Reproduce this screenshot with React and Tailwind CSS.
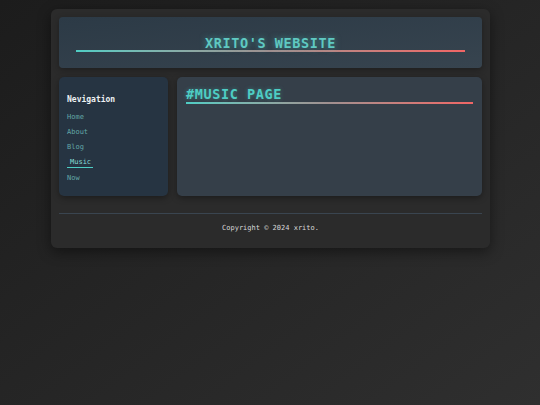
// ─── App ──────────────────────────────────────────────────────────
const NAV = ['Home', 'About', 'Blog', 'Music', 'Now']

function NavLink({ label, active }) {
  return (
    <a
      href="#"
      className={`block text-[7px] leading-[9px] ${
        active
          ? 'text-[#86dcd6] border-b border-[#4ecdc4] pl-[3px] pr-[2px] w-fit'
          : 'text-[#62a7a7]'
      }`}
    >
      {label}
    </a>
  )
}

export default function App() {
  return (
    <div
      className="min-h-[405px] w-full bg-gradient-to-br from-[#1c1c1c] to-[#2f2f2f] pt-[9px]"
      style={{ fontFamily: '"DejaVu Sans Mono", "Liberation Mono", monospace' }}
    >
      <div className="ml-[51px] w-[439px] bg-[#2b2b2b] rounded-[6px] shadow-[0_4px_14px_rgba(0,0,0,0.45)] p-[8px] pb-[15px]">
        {/* header */}
        <header className="h-[51px] rounded-[4px] bg-gradient-to-br from-[#2c3a46] to-[#37444f] shadow-[0_2px_6px_rgba(0,0,0,0.3)] px-[17px] pt-[18px]">
          <h1 className="text-center text-[13.5px] leading-[16px] font-bold tracking-[0.6px] text-[#5fc9c2] [text-shadow:0_0_6px_rgba(78,205,196,0.55)]">
            XRITO'S WEBSITE
          </h1>
          <div className="h-[2px] mt-[-1px] bg-gradient-to-r from-[#4ecdc4] via-[#a08f8f] to-[#f06565]" />
        </header>

        <div className="flex gap-[9px] mt-[9px]">
          {/* sidebar */}
          <nav className="w-[109px] h-[119px] shrink-0 rounded-[5px] bg-[#263442] shadow-[0_2px_6px_rgba(0,0,0,0.35)] px-[8px] pt-[18px]">
            <h2 className="text-[8px] leading-[10px] font-bold text-[#eef2f4] mb-[8px]">Nevigation</h2>
            <div className="flex flex-col gap-[6px]">
              {NAV.map(n => (
                <NavLink key={n} label={n} active={n === 'Music'} />
              ))}
            </div>
          </nav>

          {/* main */}
          <main className="flex-1 h-[119px] rounded-[5px] bg-[#353f49] shadow-[0_2px_6px_rgba(0,0,0,0.35)] px-[9px] pt-[10px]">
            <h2 className="text-[13.5px] leading-[14px] font-bold tracking-[0.6px] text-[#4ecdc4] [text-shadow:0_0_4px_rgba(78,205,196,0.4)]">
              #MUSIC PAGE
            </h2>
            <div className="h-[2px] mt-[1px] bg-gradient-to-r from-[#4ecdc4] via-[#a09090] to-[#f06565]" />
          </main>
        </div>

        {/* footer */}
        <footer className="mt-[17px] border-t border-[#3a4550] pt-[10px] text-center text-[7px] leading-[9px] text-[#d8d8d8]">
          Copyright © 2024 xrito.
        </footer>
      </div>
    </div>
  )
}
